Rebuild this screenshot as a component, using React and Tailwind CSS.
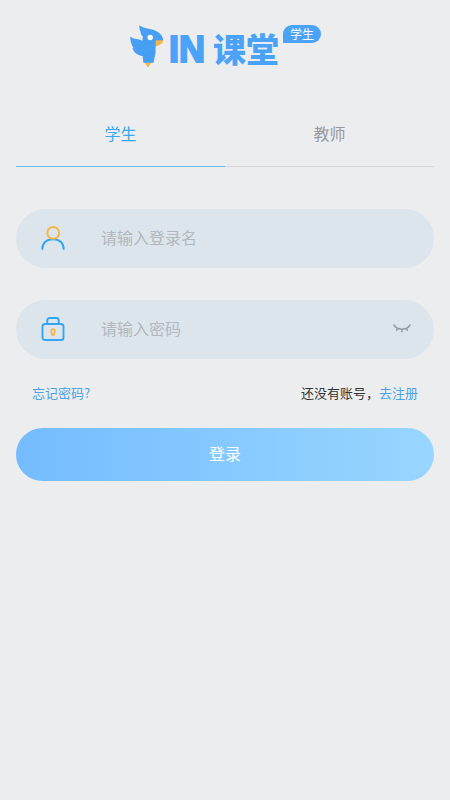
import React, { useState } from 'react';

function BirdLogo() {
  return (
    <svg className="w-9 h-11" viewBox="0 0 36 44" aria-hidden="true">
      <path d="M26 15.6H34.4C34.2 19 31.4 21.8 26 22.4Z" fill="#f6b545" />
      <path d="M15.4 38.2H22.6L19 43.4Z" fill="#f6b545" />
      <path
        d="M10.3 1.2C14 4 18.5 4.4 23 5.6C29.5 7.4 33.8 11 34.2 16.2H28.2C27 16.3 26.6 17.2 26.6 19V27C26.6 31 25.2 34 24.6 38.8H14.4L13.6 32C8.4 31.4 4.6 28.4 3.4 24L4.6 24C2.4 21 1.2 17.2 1.3 12.6C4 15 7.4 15 10 15.4C11.6 15.7 12.7 16.2 13.6 16.8C13.5 15.2 13.6 14 13.9 12.8C12.4 11.4 11.7 9.8 11.5 7.6C10.6 5.6 10.2 3.6 10.3 1.2Z"
        fill="#469ff2"
      />
      <path d="M13.8 32C18 31.4 22 29.8 24.4 27.6C21.5 29.2 17.5 30.6 13.8 32Z" fill="#3f99ee" />
      <circle cx="21.2" cy="13.5" r="2.7" fill="#fff" />
    </svg>
  );
}

function UserIcon() {
  return (
    <svg className="w-6 h-6 shrink-0" viewBox="0 0 24 24" fill="none" strokeWidth="1.9" strokeLinecap="round" aria-hidden="true">
      <path d="M1.3 23C1.3 16.9 5.9 13.2 12 13.2S22.7 16.9 22.7 23" stroke="#35a5f2" />
      <circle cx="12.2" cy="6.9" r="5.9" stroke="#f6b545" />
    </svg>
  );
}

function LockIcon() {
  return (
    <svg className="w-6 h-6 shrink-0" viewBox="0 0 24 24" fill="none" strokeWidth="1.9" strokeLinejoin="round" aria-hidden="true">
      <rect x="1.5" y="7" width="21" height="16" rx="2.6" stroke="#35a5f2" />
      <path d="M6.3 7V3.4Q6.3 1 8.7 1H15.3Q17.7 1 17.7 3.4V7" stroke="#35a5f2" />
      <path d="M12 12.2C10.6 12.2 10 13.1 10.2 14.4L11 17.8H13L13.8 14.4C14 13.1 13.4 12.2 12 12.2Z" stroke="#f6b545" strokeWidth="1.7" />
    </svg>
  );
}

function ClosedEyeIcon() {
  return (
    <svg className="w-5 h-3" viewBox="0 0 20 12" fill="none" stroke="#939ea9" strokeWidth="1.5" strokeLinecap="round" aria-hidden="true">
      <path d="M2 2C5.5 7.6 14.5 7.6 18 2M5.6 5.2 4.6 7.4M10 6.4V8.8M14.4 5.2 15.4 7.4" />
    </svg>
  );
}

const tabs = [
  { id: 'student', label: '学生' },
  { id: 'teacher', label: '教师' },
];

function App() {
  const [role, setRole] = useState('student');
  const [showPassword, setShowPassword] = useState(false);

  return (
    <main className="min-h-screen bg-[#ebedef] px-4 pt-6 font-['Noto_Sans_CJK_SC',sans-serif]">
      <h1 className="flex h-11 justify-center text-[#4aa3f7]">
        <BirdLogo />
        <span className="ml-1 text-4xl leading-[52px] font-bold font-['Liberation_Sans',sans-serif] [-webkit-text-stroke:2px_#4aa3f7]">IN</span>
        <span className="ml-2 text-[33px] leading-[48px] font-black">课堂</span>
        <span className="ml-1 mt-px h-[18px] w-[38px] rounded-full rounded-bl-none bg-[#4aa3f7] text-center text-xs leading-[18px] font-normal text-white">
          学生
        </span>
      </h1>

      <div role="tablist" className="mt-8 flex">
        {tabs.map((tab) => (
          <button
            key={tab.id}
            type="button"
            role="tab"
            aria-selected={role === tab.id}
            onClick={() => setRole(tab.id)}
            className={`h-[67px] flex-1 border-b text-base ${
              role === tab.id ? 'border-[#63bfe3] text-[#37a8f0]' : 'border-[#d3d6d9] text-[#97999c]'
            }`}
          >
            {tab.label}
          </button>
        ))}
      </div>

      <form className="pt-[42px]" onSubmit={(e) => e.preventDefault()}>
        <div className="flex h-[59px] items-center gap-9 rounded-full bg-[#dce5ec] pb-0.5 pl-[25px] pr-[22px]">
          <label htmlFor="username" aria-label="登录名">
            <UserIcon />
          </label>
          <input
            id="username"
            type="text"
            placeholder="请输入登录名"
            className="min-w-0 flex-1 bg-transparent pb-0.5 text-base text-gray-700 outline-none placeholder:text-[#b2b8bd]"
          />
        </div>

        <div className="mt-8 flex h-[59px] items-center gap-9 rounded-full bg-[#dce5ec] pb-0.5 pl-[25px] pr-[22px]">
          <label htmlFor="password" aria-label="密码">
            <LockIcon />
          </label>
          <input
            id="password"
            type={showPassword ? 'text' : 'password'}
            placeholder="请输入密码"
            className="min-w-0 flex-1 bg-transparent pb-0.5 text-base text-gray-700 outline-none placeholder:text-[#b2b8bd]"
          />
          <button type="button" aria-label="显示密码" onClick={() => setShowPassword(!showPassword)}>
            <ClosedEyeIcon />
          </button>
        </div>

        <div className="mt-6 flex justify-between px-4 text-[13px] leading-5">
          <a href="#forgot" className="text-[#4ba3e3]">忘记密码?</a>
          <p className="text-[#333537]">
            还没有账号，
            <a href="#register" className="text-[#4ba3e3]">去注册</a>
          </p>
        </div>

        <button
          type="submit"
          className="mt-[25px] h-[53px] w-full rounded-full bg-linear-to-r from-[#74bcff] to-[#98d6ff] pb-1 text-base text-white"
        >
          登录
        </button>
      </form>
    </main>
  );
}

export default App;
